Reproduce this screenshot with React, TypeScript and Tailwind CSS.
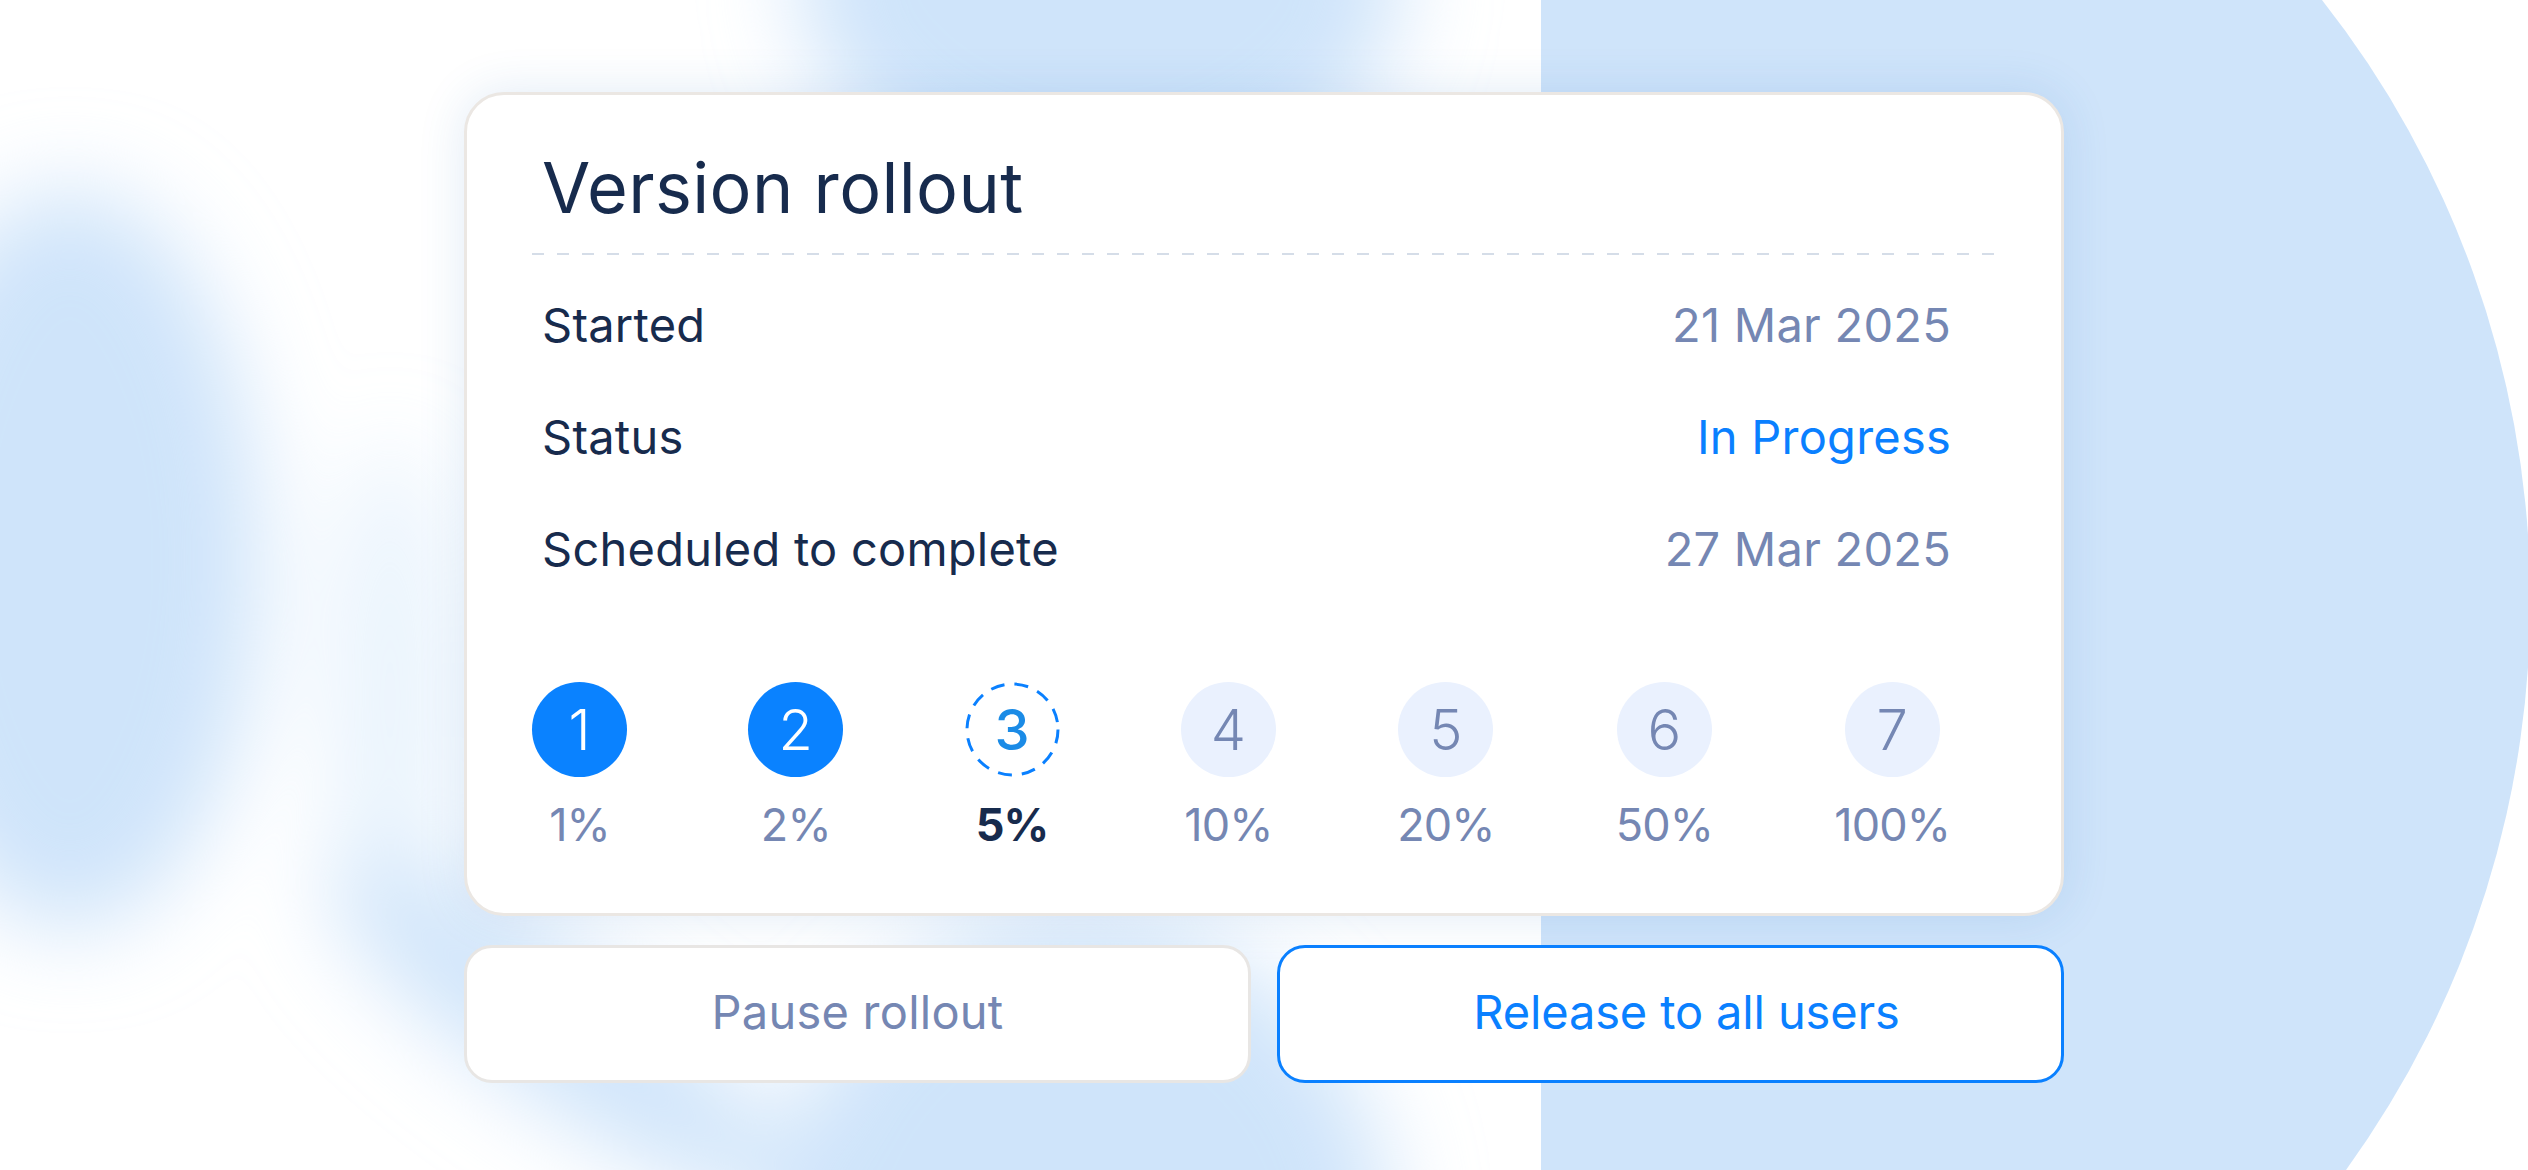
import React from "react";

type StepState = "done" | "current" | "todo";

interface Step {
    n: number;
    pct: string;
    state: StepState;
}

const steps: Step[] = [
    { n: 1, pct: "1%", state: "done" },
    { n: 2, pct: "2%", state: "done" },
    { n: 3, pct: "5%", state: "current" },
    { n: 4, pct: "10%", state: "todo" },
    { n: 5, pct: "20%", state: "todo" },
    { n: 6, pct: "50%", state: "todo" },
    { n: 7, pct: "100%", state: "todo" },
];

const details = [
    { label: "Started", value: "21 Mar 2025", tone: "text-[#7587b3]" },
    { label: "Status", value: "In Progress", tone: "text-[#0a80ff]" },
    { label: "Scheduled to complete", value: "27 Mar 2025", tone: "text-[#7587b3]" },
];

// soft blurred shapes behind the card
const Backdrop: React.FC = () => (
    <svg className="absolute inset-0" width="2528" height="1170" viewBox="0 0 2528 1170">
        <defs>
            <filter id="soft" x="-50%" y="-50%" width="200%" height="200%">
                <feGaussianBlur stdDeviation="45" />
            </filter>
        </defs>
        <g filter="url(#soft)" fill="#cfe4fa">
            <ellipse cx="70" cy="560" rx="190" ry="370" />
            <ellipse cx="1100" cy="-20" rx="300" ry="220" />
            <ellipse cx="1080" cy="1240" rx="310" ry="320" />
            <ellipse cx="560" cy="1030" rx="280" ry="70" transform="rotate(35 560 1030)" />
            <ellipse cx="390" cy="700" rx="60" ry="260" opacity="0.45" />
        </g>
        <path d="M1541 0 H2322 A971 971 0 0 1 2346 1170 H1541 Z" fill="#cfe4fa" />
    </svg>
);

const StepBadge: React.FC<{ step: Step }> = ({ step }) => {
    if (step.state === "current") {
        return (
            <div className="relative w-[95px] h-[95px] flex items-center justify-center">
                <svg className="absolute inset-0" width="95" height="95" viewBox="0 0 95 95">
                    <circle cx="47.5" cy="47.5" r="45.5" fill="none" stroke="#0a80ff" strokeWidth="3" strokeDasharray="14 10" />
                </svg>
                <span className="relative text-[56px] leading-none font-medium text-[#1b8be6]">{step.n}</span>
            </div>
        );
    }

    const look = step.state === "done" ? "bg-[#0a82ff] text-white" : "bg-[#eaf1fe] text-[#7587b3]";
    return (
        <div className={`w-[95px] h-[95px] rounded-full flex items-center justify-center ${look}`}>
            <span className="text-[56px] leading-none font-light">{step.n}</span>
        </div>
    );
};

const RolloutCard: React.FC = () => (
    <div className="h-[824px] rounded-[40px] border-[3px] border-[#ebe7e3] bg-white px-[65px] pt-[58px] shadow-[0_0_48px_rgba(40,110,190,0.14)]">
        <h1 className="pl-[10px] text-[70px] leading-[69px] tracking-[0.005em] font-normal text-[#172b4d]">
            Version rollout
        </h1>

        <div className="mt-[31px] h-[2px] bg-[linear-gradient(to_right,#d5dde8_12px,transparent_12px)] bg-[length:25px_2px]" />

        <div className="mt-[13px] pl-[10px] pr-[45px]">
            {details.map((row) => (
                <div
                    key={row.label}
                    className="h-[112px] flex items-center justify-between text-[47px] leading-none tracking-[0.005em]"
                >
                    <span className="text-[#172b4d]">{row.label}</span>
                    <span className={row.tone}>{row.value}</span>
                </div>
            ))}
        </div>

        <div className="mt-[78px] pr-[46px] flex justify-between">
            {steps.map((step) => (
                <div key={step.n} className="flex flex-col items-center">
                    <StepBadge step={step} />
                    <span
                        className={`mt-[20px] text-[45px] leading-[56px] tracking-[-0.02em] ${
                            step.state === "current" ? "font-bold text-[#172b4d]" : "text-[#7587b3]"
                        }`}
                    >
                        {step.pct}
                    </span>
                </div>
            ))}
        </div>
    </div>
);

export default function App() {
    return (
        <div className="relative w-[2528px] h-[1170px] overflow-hidden bg-white font-[Inter,'Noto_Sans',sans-serif]">
            <Backdrop />

            <div className="relative w-[2064px] pl-[464px] pt-[92px]">
                <RolloutCard />

                <div className="mt-[29px] grid grid-cols-2 gap-[26px]">
                    <button className="h-[138px] pb-[3px] rounded-[28px] border-[3px] border-[#e8e6e4] bg-white text-[47px] tracking-[0.005em] text-[#7587b3]">
                        Pause rollout
                    </button>
                    <button className="h-[138px] pb-[3px] pl-[32px] rounded-[28px] border-[3px] border-[#0a80ff] bg-white text-[47px] tracking-[-0.003em] text-[#0a80ff]">
                        Release to all users
                    </button>
                </div>
            </div>
        </div>
    );
}
